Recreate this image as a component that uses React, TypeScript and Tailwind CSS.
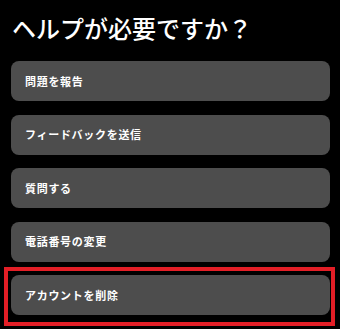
const items = ["問題を報告", "フィードバックを送信", "質問する", "電話番号の変更", "アカウントを削除"];

export default function App() {
  return (
    <div
      className="min-h-screen w-full bg-black text-white"
      style={{ fontFamily: '"Noto Sans CJK JP", "Noto Sans", sans-serif' }}
    >
      <div className="pl-[11px] pr-[10px] pt-[12px]">
        <h1 className="text-[24px] leading-[32px] font-medium pl-[1px]">ヘルプが必要ですか？</h1>
        <div className="mt-[17px] flex flex-col gap-[13.5px]">
          {items.map((label, i) => (
            <div key={label} className="relative">
              <button className="flex h-[40px] w-full items-center rounded-lg bg-[#4d4d4d] pl-[14px] text-[11px] tracking-[0.7px] font-bold text-white">
                {label}
              </button>
              {i === items.length - 1 && (
                <div className="pointer-events-none absolute -left-[7px] -right-[5px] -top-[8px] -bottom-[11px] border-[4px] border-[#e31e26]" />
              )}
            </div>
          ))}
        </div>
      </div>
    </div>
  );
}
